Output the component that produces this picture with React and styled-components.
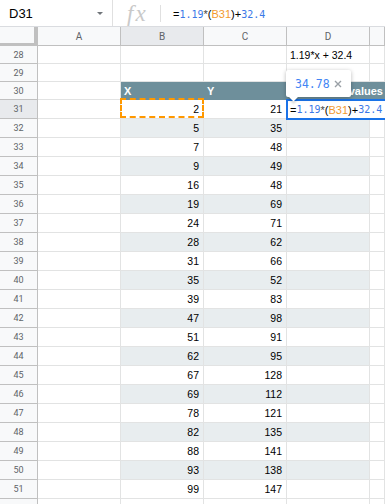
import React from "react";
import styled, { createGlobalStyle } from "styled-components";

const GlobalStyle = createGlobalStyle`
  html, body {
    margin: 0;
    padding: 0;
    background: #fff;
  }
  body {
    width: 385px;
    height: 504px;
    overflow: hidden;
    font-family: "Liberation Sans", Arial, sans-serif;
  }
`;

const COLS = "38px 83px 83px 83px 83px 1fr";
const SLATE = "#6e8f9b";
const BAND = "#e8edef";
const GRID = "#e2e3e3";
const HEAD_LINE = "#c0c0c0";

const data = [
  [31, 2, 21], [32, 5, 35], [33, 7, 48], [34, 9, 49], [35, 16, 48],
  [36, 19, 69], [37, 24, 71], [38, 28, 62], [39, 31, 66], [40, 35, 52],
  [41, 39, 83], [42, 47, 98], [43, 51, 91], [44, 62, 95], [45, 67, 128],
  [46, 69, 112], [47, 78, 121], [48, 82, 135], [49, 88, 141], [50, 93, 138],
  [51, 99, 147],
];

const FormulaBar = styled.div`
  height: 27px;
  box-sizing: border-box;
  border-bottom: 1px solid #dadce0;
  display: flex;
  align-items: center;
`;

const NameBox = styled.div`
  width: 113px;
  height: 100%;
  box-sizing: border-box;
  border-right: 1px solid #e0e0e0;
  padding: 0 9px;
  display: flex;
  align-items: center;
  justify-content: space-between;
  font-size: 13px;
  color: #000;
`;

const Caret = styled.span`
  width: 0;
  height: 0;
  border-left: 3px solid transparent;
  border-right: 3px solid transparent;
  border-top: 3px solid #70757a;
`;

const FxBox = styled.div`
  width: 47px;
  box-sizing: border-box;
  padding-left: 14px;
  font-family: "Liberation Serif", serif;
  font-style: italic;
  font-size: 23px;
  letter-spacing: 2px;
  color: #c9c9c9;
  line-height: 1;
`;

const Divider = styled.div`
  width: 1px;
  height: 17px;
  background: #e0e0e0;
`;

const FormulaText = styled.div`
  margin-left: 12px;
  white-space: nowrap;
`;

const Tok = styled.span`
  color: ${(p) => p.$c || "#000"};
  font-family: ${(p) =>
    p.$mono ? '"DejaVu Sans Mono", "Liberation Mono", monospace' : '"Liberation Sans", Arial, sans-serif'};
  font-size: ${(p) => (p.$mono ? "10px" : "11px")};
`;

const Sheet = styled.div`
  height: 477px;
  overflow: hidden;
`;

const Row = styled.div`
  display: grid;
  grid-template-columns: ${COLS};
  height: ${(p) => p.$h}px;
`;

const Corner = styled.div`
  box-sizing: border-box;
  background: #f8f9fa;
  border-right: 4px solid ${HEAD_LINE};
  border-bottom: 3px solid ${HEAD_LINE};
`;

const ColHead = styled.div`
  box-sizing: border-box;
  background: ${(p) => (p.$active ? "#e8eaed" : "#f8f9fa")};
  border-right: 1px solid ${HEAD_LINE};
  border-bottom: 1px solid ${HEAD_LINE};
  display: flex;
  align-items: center;
  justify-content: center;
  font-family: Roboto, "Liberation Sans", sans-serif;
  font-size: 10px;
  color: #5f6368;
`;

const RowHead = styled(ColHead)`
  font-size: 9px;
  overflow: hidden;
`;

const Cell = styled.div`
  position: relative;
  box-sizing: border-box;
  background: ${(p) => p.$bg || "#fff"};
  border-right: 1px solid ${(p) => p.$line || GRID};
  border-bottom: 1px solid ${(p) => p.$line || GRID};
  padding: 0 4px 0 3px;
  display: flex;
  align-items: center;
  justify-content: ${(p) => (p.$right ? "flex-end" : "flex-start")};
  font-size: 10.5px;
  color: #000;
  white-space: nowrap;

  ${(p) =>
    p.$marquee &&
    `
    &::after {
      content: "";
      position: absolute;
      top: -2px;
      left: -1px;
      right: -1px;
      bottom: 0;
      border: 2px dashed #ff9800;
      z-index: 1;
    }
  `}
`;

const HeadLabel = styled.span`
  position: relative;
  z-index: 1;
  color: #fff;
  font-weight: bold;
  font-size: 11px;
`;

const Editor = styled.div`
  position: absolute;
  left: -1px;
  top: -1px;
  width: 112px;
  height: 21px;
  box-sizing: border-box;
  border: 2px solid #1a73e8;
  background: #fff;
  padding-left: 2px;
  display: flex;
  align-items: center;
  white-space: nowrap;
  z-index: 2;
`;

const Preview = styled.div`
  position: absolute;
  left: -1px;
  top: -30px;
  width: 65px;
  height: 27px;
  box-sizing: border-box;
  padding-left: 9px;
  background: #fff;
  border-radius: 2px;
  box-shadow: 0 1px 4px rgba(0, 0, 0, 0.28);
  display: flex;
  align-items: center;
  gap: 4px;
  z-index: 3;

  &::after {
    content: "";
    position: absolute;
    left: 4px;
    bottom: -3px;
    width: 7px;
    height: 7px;
    background: #fff;
    transform: rotate(45deg);
    box-shadow: 2px 2px 2px rgba(0, 0, 0, 0.12);
  }
`;

const PreviewValue = styled.span`
  font-family: "DejaVu Sans Mono", "Liberation Mono", monospace;
  font-size: 11.5px;
  color: #4285f4;
`;

const Formula = () => (
  <>
    <Tok>=</Tok>
    <Tok $mono $c="#3b78e7">1.19</Tok>
    <Tok $c="#444">*</Tok>
    <Tok>(</Tok>
    <Tok $c="#f29a2e">B31</Tok>
    <Tok>)</Tok>
    <Tok>+</Tok>
    <Tok $mono $c="#3b78e7">32.4</Tok>
  </>
);

const CloseIcon = () => (
  <svg width="8" height="8" viewBox="0 0 8 8">
    <path d="M1 1L7 7M7 1L1 7" stroke="#9aa0a6" strokeWidth="1.4" />
  </svg>
);

function App() {
  return (
    <>
      <GlobalStyle />
      <FormulaBar>
        <NameBox>
          D31
          <Caret />
        </NameBox>
        <FxBox>fx</FxBox>
        <Divider />
        <FormulaText>
          <Formula />
        </FormulaText>
      </FormulaBar>
      <Sheet>
        <Row $h={19}>
          <Corner />
          <ColHead>A</ColHead>
          <ColHead $active>B</ColHead>
          <ColHead>C</ColHead>
          <ColHead>D</ColHead>
          <ColHead />
        </Row>
        <Row $h={18}>
          <RowHead>28</RowHead>
          <Cell />
          <Cell />
          <Cell />
          <Cell>1.19*x + 32.4</Cell>
          <Cell />
        </Row>
        <Row $h={18}>
          <RowHead>29</RowHead>
          <Cell />
          <Cell />
          <Cell />
          <Cell />
          <Cell />
        </Row>
        <Row $h={18}>
          <RowHead>30</RowHead>
          <Cell />
          <Cell $bg={SLATE} $line={SLATE}>
            <HeadLabel>X</HeadLabel>
          </Cell>
          <Cell $bg={SLATE} $line={SLATE}>
            <HeadLabel>Y</HeadLabel>
          </Cell>
          <Cell $bg={SLATE} $line={SLATE}>
            <HeadLabel>Calculated values</HeadLabel>
          </Cell>
          <Cell $bg={SLATE} $line={SLATE} />
        </Row>
        {data.map(([n, x, y]) => {
          const bg = n % 2 === 0 ? BAND : "#fff";
          return (
            <Row $h={19} key={n}>
              <RowHead $active={n === 31}>{n}</RowHead>
              <Cell />
              <Cell $right $bg={bg} $marquee={n === 31}>
                {x}
              </Cell>
              <Cell $right $bg={bg}>
                {y}
              </Cell>
              <Cell $bg={bg}>
                {n === 31 && (
                  <>
                    <Preview>
                      <PreviewValue>34.78</PreviewValue>
                      <CloseIcon />
                    </Preview>
                    <Editor>
                      <Formula />
                    </Editor>
                  </>
                )}
              </Cell>
              <Cell />
            </Row>
          );
        })}
        <Row $h={19}>
          <RowHead>52</RowHead>
          <Cell />
          <Cell />
          <Cell />
          <Cell />
          <Cell />
        </Row>
      </Sheet>
    </>
  );
}

export default App;
